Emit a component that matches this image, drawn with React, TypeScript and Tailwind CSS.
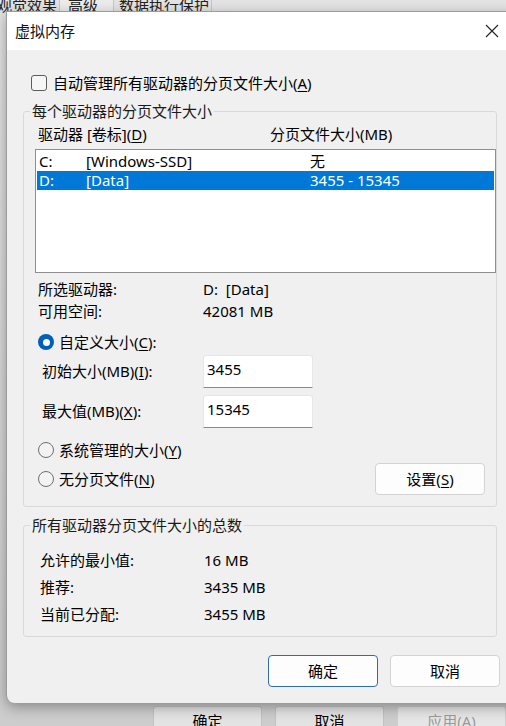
import React from 'react';

const FONT = "font-['Noto_Sans','Noto_Sans_CJK_SC',sans-serif]";

function Radio({ checked }: { checked?: boolean }) {
  if (checked) {
    return (
      <span className="flex h-[16px] w-[16px] items-center justify-center rounded-full bg-[#005fb8]">
        <span className="h-[7px] w-[7px] rounded-full bg-white" />
      </span>
    );
  }
  return <span className="h-[16px] w-[16px] rounded-full border border-[#6e6e6e] bg-[#f3f3f3]" />;
}

function U({ children }: { children: React.ReactNode }) {
  return <span className="underline decoration-1 underline-offset-2">{children}</span>;
}

function Legend({ children }: { children: React.ReactNode }) {
  return (
    <legend className="ml-[6px] h-[20px] px-[2px] text-[15px] leading-[20px] text-[#1a1a1a]">{children}</legend>
  );
}

function SizeField({ label, value, mt }: { label: React.ReactNode; value: string; mt: string }) {
  return (
    <div className={`flex items-center ${mt}`}>
      <span className="ml-[18px] w-[161px]">{label}</span>
      <div className="h-[33px] w-[110px] rounded-t-[3px] border border-b-[#8a8a8a] border-[#e6e6e6] bg-white pl-[3px] pt-[2px] leading-[22px]">
        {value}
      </div>
    </div>
  );
}

export default function App() {
  return (
    <div className={`relative h-[726px] w-[506px] overflow-hidden bg-[#e6e6e6] text-[15px] text-black ${FONT}`}>
      {/* background window: tabs on top, buttons at bottom */}
      <div className="flex h-full flex-col bg-gradient-to-b from-[#e4e4e4] via-[#d9d9d9] to-[#cdcdcd]">
        <div className="-mt-[6px] flex h-[21px] items-center whitespace-nowrap text-[15px] leading-[20px] text-[#222]">
          <span className="-ml-[3px] w-[63px] border-r border-[#c6c6c6] pr-2">观觉效果</span>
          <span className="w-[54px] border-r border-[#c6c6c6] bg-[#ececec] pl-[8px]">高级</span>
          <span className="w-[98px] border-r border-[#c6c6c6] pl-[5px]">数据执行保护</span>
        </div>
        <div className="mt-auto flex gap-[13px] pl-[153px]">
          <div className="h-[20px] w-[110px] rounded-t-[3px] border border-b-0 border-[#c2c2c2] bg-[#e3e3e3] pt-[3px] text-center leading-[22px]">确定</div>
          <div className="h-[20px] w-[110px] rounded-t-[3px] border border-b-0 border-[#c2c2c2] bg-[#e3e3e3] pt-[3px] text-center leading-[22px]">取消</div>
          <div className="h-[20px] w-[110px] rounded-t-[3px] border border-b-0 border-[#cfcfcf] bg-[#e6e6e6] pt-[3px] text-center leading-[22px] text-[#9a9a9a]">应用(A)</div>
        </div>
      </div>

      {/* dialog window */}
      <div className="absolute left-[6px] top-[11px] flex h-[692px] w-[520px] flex-col overflow-hidden rounded-bl-[8px] border-t border-l border-[#9c9c9c] bg-[#f0f0f0] shadow-[0_4px_14px_rgba(0,0,0,0.35)]">
        <div className="flex h-[38px] items-center justify-between bg-white">
          <span className="ml-[8px] text-[15px] text-[#111]">虚拟内存</span>
          <svg className="mr-[27px] h-[14px] w-[14px]" viewBox="0 0 14 14" fill="none" stroke="#222" strokeWidth="1.1">
            <path d="M1 1L13 13M13 1L1 13" />
          </svg>
        </div>

        <div className="flex flex-col">
          {/* auto manage checkbox */}
          <div className="mt-[23px] flex h-[20px] items-center pl-[24px]">
            <span className="h-[16px] w-[16px] rounded-[3px] border border-[#5c5c5c] bg-[#f6f6f6]" />
            <span className="ml-[6px]">
              自动管理所有驱动器的分页文件大小(<U>A</U>)
            </span>
          </div>

          {/* per-drive group */}
          <fieldset className="ml-[16px] mt-[8px] w-[474px] rounded-[3px] border border-[#d9d9d9] pb-[11px]">
            <Legend>每个驱动器的分页文件大小</Legend>
            <div className="mt-[3px] flex h-[20px] items-center">
              <span className="ml-[14px] w-[232px]">
                驱动器 [卷标](<U>D</U>)
              </span>
              <span>分页文件大小(MB)</span>
            </div>
            <div className="ml-[11px] mt-[5px] h-[124px] w-[461px] border border-[#8f8f8f] bg-white pt-[2px]">
              <div className="mx-[1px] flex h-[19px] items-center">
                <span className="w-[49px] pl-[2px]">C:</span>
                <span className="w-[224px]">[Windows-SSD]</span>
                <span>无</span>
              </div>
              <div className="mx-[1px] flex h-[19px] items-center bg-[#0078d7] text-white">
                <span className="w-[49px] pl-[2px]">D:</span>
                <span className="w-[224px]">[Data]</span>
                <span>3455 - 15345</span>
              </div>
            </div>

            <div className="mt-[5px] flex h-[22px] items-center">
              <span className="ml-[14px] w-[165px]">所选驱动器:</span>
              <span>D:&nbsp;&nbsp;[Data]</span>
            </div>
            <div className="flex h-[22px] items-center">
              <span className="ml-[14px] w-[165px]">可用空间:</span>
              <span>42081 MB</span>
            </div>

            <div className="mt-[10px] flex h-[20px] items-center pl-[14px]">
              <Radio checked />
              <span className="ml-[5px]">
                自定义大小(<U>C</U>):
              </span>
            </div>

            <SizeField
              mt="mt-[3px]"
              value="3455"
              label={
                <>
                  初始大小(MB)(<U>I</U>):
                </>
              }
            />
            <SizeField
              mt="mt-[7px]"
              value="15345"
              label={
                <>
                  最大值(MB)(<U>X</U>):
                </>
              }
            />

            <div className="mt-[12px] flex h-[20px] items-center pl-[14px]">
              <Radio />
              <span className="ml-[5px]">
                系统管理的大小(<U>Y</U>)
              </span>
            </div>

            <div className="mt-[3px] flex h-[32px] items-center pl-[14px]">
              <Radio />
              <span className="ml-[5px]">
                无分页文件(<U>N</U>)
              </span>
              <button
                type="button"
                className="ml-auto mr-[11px] h-[32px] w-[110px] rounded-[4px] border border-[#d3d3d3] bg-[#fdfdfd] text-[15px]"
              >
                设置(<U>S</U>)
              </button>
            </div>
          </fieldset>

          {/* totals group */}
          <fieldset className="ml-[16px] mt-[8px] w-[474px] rounded-[3px] border border-[#d9d9d9] pb-[8px]">
            <Legend>所有驱动器分页文件大小的总数</Legend>
            <div className="mt-[12px] flex h-[27px] items-center">
              <span className="ml-[16px] w-[164px]">允许的最小值:</span>
              <span>16 MB</span>
            </div>
            <div className="flex h-[27px] items-center">
              <span className="ml-[16px] w-[164px]">推荐:</span>
              <span>3435 MB</span>
            </div>
            <div className="flex h-[27px] items-center">
              <span className="ml-[16px] w-[164px]">当前已分配:</span>
              <span>3455 MB</span>
            </div>
          </fieldset>

          <div className="mt-[18px] flex gap-[12px] pl-[261px]">
            <button
              type="button"
              className="h-[32px] w-[110px] rounded-[4px] border border-[#2d6cb0] bg-[#fdfdfd] text-[15px]"
            >
              确定
            </button>
            <button
              type="button"
              className="h-[32px] w-[110px] rounded-[4px] border border-[#d3d3d3] bg-[#fdfdfd] text-[15px]"
            >
              取消
            </button>
          </div>
        </div>
      </div>
    </div>
  );
}
